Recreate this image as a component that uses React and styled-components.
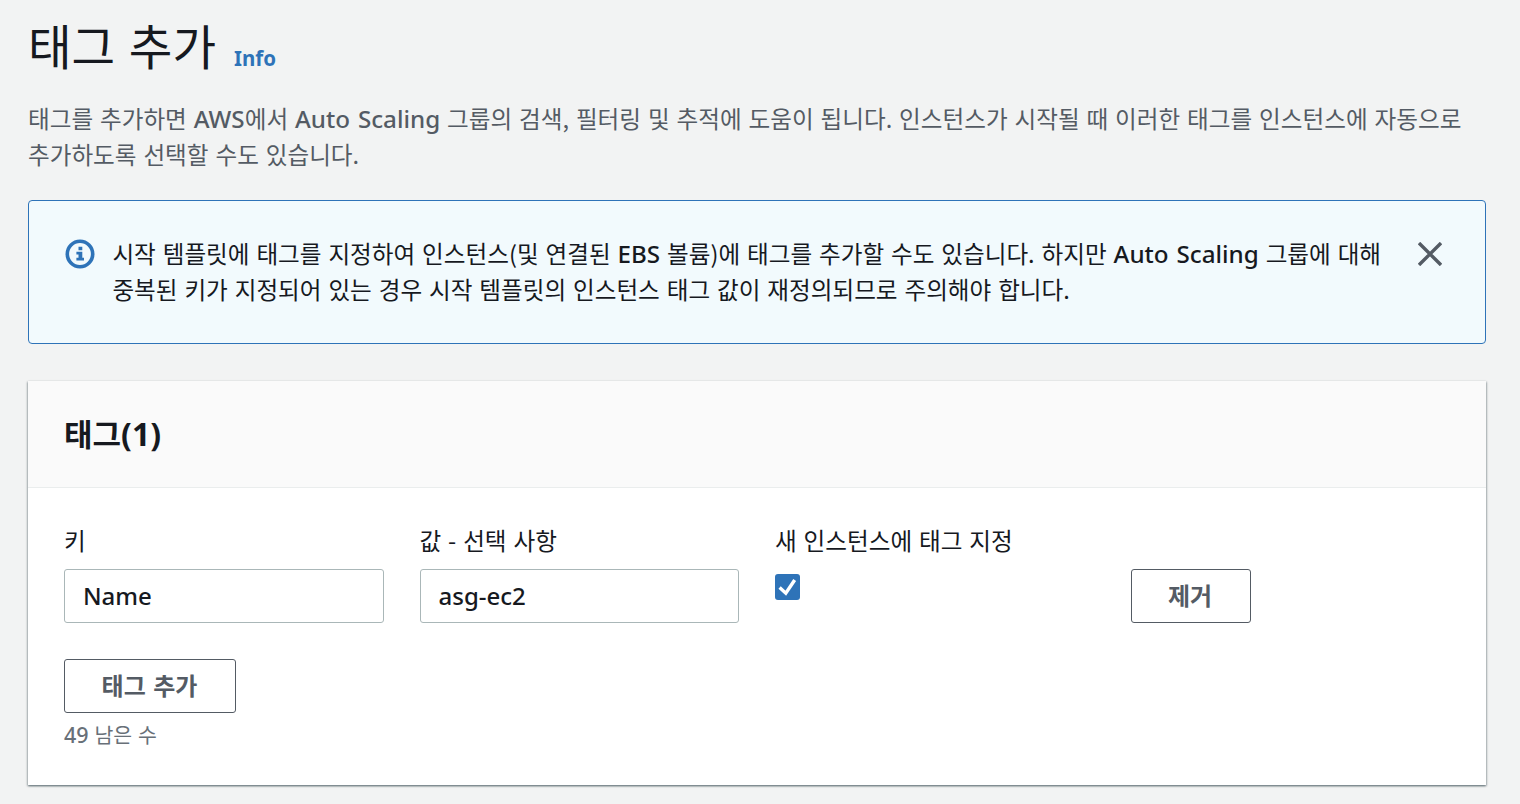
import React, { useState } from "react";
import styled, { createGlobalStyle } from "styled-components";

const App = () => {
  const [checked, setChecked] = useState(true);

  return (
    <Page>
      <GlobalStyle />
      <TitleRow>
        <Title>태그 추가</Title>
        <InfoLink>Info</InfoLink>
      </TitleRow>
      <Description>
        태그를 추가하면 <Latin>AWS</Latin>에서 <Latin>Auto Scaling</Latin> 그룹의
        검색, 필터링 및 추적에 도움이 됩니다. 인스턴스가 시작될 때 이러한 태그를
        인스턴스에 자동으로
        <br />
        추가하도록 선택할 수도 있습니다.
      </Description>

      <Alert>
        <InfoIcon viewBox="0 0 30 30">
          <circle cx="15" cy="15" r="12.7" />
          <path d="M13.5 7.8h3.8v3.4h-3.8zM11.4 12.8h5.9v6h1.7v2.7h-7.6v-2.7h2.1v-3.3h-2.1z" />
        </InfoIcon>
        <AlertText>
          시작 템플릿에 태그를 지정하여 인스턴스(및 연결된 <Latin>EBS</Latin>{" "}
          볼륨)에 태그를 추가할 수도 있습니다. 하지만{" "}
          <Latin>Auto Scaling</Latin> 그룹에 대해
          <br />
          중복된 키가 지정되어 있는 경우 시작 템플릿의 인스턴스 태그 값이
          재정의되므로 주의해야 합니다.
        </AlertText>
        <CloseIcon viewBox="0 0 24 24">
          <path d="M1 1l22 22M23 1L1 23" />
        </CloseIcon>
      </Alert>

      <Card>
        <CardHeader>
          <CardTitle>
            태그<Count>(1)</Count>
          </CardTitle>
        </CardHeader>
        <CardBody>
          <TagGrid>
            <Field>
              <Label>키</Label>
              <Input defaultValue="Name" />
            </Field>
            <Field>
              <Label>값 - 선택 사항</Label>
              <Input defaultValue="asg-ec2" />
            </Field>
            <Field>
              <Label>새 인스턴스에 태그 지정</Label>
              <Checkbox $checked={checked} onClick={() => setChecked(!checked)}>
                {checked && (
                  <CheckMark viewBox="0 0 25 26">
                    <path d="M4.6 13.6l6.2 5.6L19.7 6" />
                  </CheckMark>
                )}
              </Checkbox>
            </Field>
            <RemoveField>
              <Button $width={120}>제거</Button>
            </RemoveField>
          </TagGrid>
          <Button $width={172}>태그 추가</Button>
          <Remaining>
            <RemainingCount>49</RemainingCount> 남은 수
          </Remaining>
        </CardBody>
      </Card>
    </Page>
  );
};

const GlobalStyle = createGlobalStyle`
  * {
    box-sizing: border-box;
  }
  body {
    margin: 0;
    background: #f2f3f3;
    overflow: hidden;
  }
`;

const Page = styled.div`
  height: 804px;
  padding: 15px 34px 0 28px;
  background: #f2f3f3;
  color: #16191f;
  font-family: "Noto Sans CJK KR", "Noto Sans", sans-serif;
  font-size: 23.6px;
  line-height: 36px;
  white-space: nowrap;
  word-spacing: 1.6px;
`;

const TitleRow = styled.div`
  display: flex;
  align-items: flex-start;
  height: 85px;
`;

const Title = styled.h1`
  margin: 0;
  font-size: 47.4px;
  font-weight: 400;
  line-height: 60px;
  word-spacing: 3px;
`;

const InfoLink = styled.a`
  margin: 25px 0 0 18px;
  color: #2e73b8;
  font-family: "Noto Sans", sans-serif;
  font-size: 20.5px;
  font-weight: 700;
`;

const Latin = styled.span`
  font-family: "Noto Sans", sans-serif;
  font-size: 24.2px;
  font-weight: 500;
  line-height: 1;
`;

const Description = styled.p`
  margin: 0;
  color: #545b64;
`;

const Alert = styled.div`
  display: flex;
  align-items: flex-start;
  height: 144px;
  margin-top: 28px;
  padding: 34px 43px 0 36px;
  border: 1px solid #2e73b8;
  border-radius: 4px;
  background: #f2fafd;
`;

const InfoIcon = styled.svg`
  flex: none;
  width: 30px;
  height: 30px;
  margin-top: 4px;
  fill: #2e73b8;

  circle {
    fill: none;
    stroke: #2e73b8;
    stroke-width: 3.6;
  }
`;

const AlertText = styled.div`
  flex: 1;
  margin-left: 17.4px;
`;

const CloseIcon = styled.svg`
  flex: none;
  width: 24px;
  height: 24px;
  margin-top: 7px;
  fill: none;
  stroke: #545b64;
  stroke-width: 3.4;
`;

const Card = styled.section`
  height: 404px;
  margin-top: 37px;
  background: #fff;
  box-shadow: 0 1px 2px rgba(0, 28, 36, 0.5), 1px 1px 2px rgba(0, 28, 36, 0.15),
    -1px 1px 2px rgba(0, 28, 36, 0.15);
`;

const CardHeader = styled.header`
  height: 107px;
  padding: 34px 36px 0;
  border-bottom: 1px solid #eaeded;
  background: #fafafa;
`;

const CardTitle = styled.h2`
  margin: 0;
  font-size: 31px;
  font-weight: 700;
  line-height: 36px;
`;

const Count = styled.span`
  font-family: "Noto Sans", sans-serif;
  font-size: 32px;
  line-height: 1;
`;

const CardBody = styled.div`
  padding: 34px 36px 0;
`;

const TagGrid = styled.div`
  display: grid;
  grid-template-columns: repeat(4, 319.5px);
  column-gap: 36px;
  margin-bottom: 36px;
`;

const Field = styled.div`
  display: flex;
  flex-direction: column;
`;

const RemoveField = styled(Field)`
  justify-content: flex-end;
`;

const Label = styled.label`
  height: 47px;
`;

const Input = styled.input`
  width: 100%;
  height: 54px;
  padding: 0 18px 2px;
  border: 1px solid #aab7b8;
  border-radius: 3px;
  background: #fff;
  color: #16191f;
  font-family: "Noto Sans", sans-serif;
  font-size: 24px;
  font-weight: 500;
  outline: none;
`;

const Checkbox = styled.button`
  width: 25px;
  height: 26px;
  margin-top: 5px;
  padding: 0;
  border: ${({ $checked }) => ($checked ? "0" : "1px solid #687078")};
  border-radius: 3px;
  background: ${({ $checked }) => ($checked ? "#2e73b8" : "#fff")};
`;

const CheckMark = styled.svg`
  display: block;
  width: 25px;
  height: 26px;
  fill: none;
  stroke: #fff;
  stroke-width: 3.4;
`;

const Button = styled.button`
  display: block;
  width: ${({ $width }) => $width}px;
  height: 54px;
  padding: 0 1px 3px 0;
  border: 1px solid #545b64;
  border-radius: 3px;
  background: #fff;
  color: #545b64;
  font-family: inherit;
  font-size: 24px;
  font-weight: 700;
  word-spacing: 2px;
`;

const Remaining = styled.div`
  margin-top: 3px;
  color: #687078;
  font-size: 20.5px;
  word-spacing: 1.2px;
`;

const RemainingCount = styled.span`
  font-family: "Noto Sans", sans-serif;
  font-size: 21.5px;
  font-weight: 500;
  line-height: 1;
`;

export default App;
